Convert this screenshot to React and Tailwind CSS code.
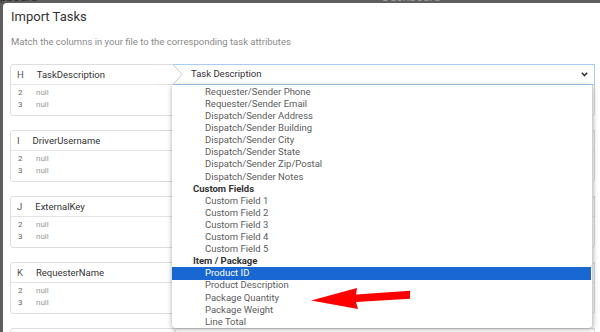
import React from 'react';

const options = [
  { t: 'opt', label: 'Requester/Sender Phone' },
  { t: 'opt', label: 'Requester/Sender Email' },
  { t: 'opt', label: 'Dispatch/Sender Address' },
  { t: 'opt', label: 'Dispatch/Sender Building' },
  { t: 'opt', label: 'Dispatch/Sender City' },
  { t: 'opt', label: 'Dispatch/Sender State' },
  { t: 'opt', label: 'Dispatch/Sender Zip/Postal' },
  { t: 'opt', label: 'Dispatch/Sender Notes' },
  { t: 'group', label: 'Custom Fields' },
  { t: 'opt', label: 'Custom Field 1' },
  { t: 'opt', label: 'Custom Field 2' },
  { t: 'opt', label: 'Custom Field 3' },
  { t: 'opt', label: 'Custom Field 4' },
  { t: 'opt', label: 'Custom Field 5' },
  { t: 'group', label: 'Item / Package' },
  { t: 'sel', label: 'Product ID' },
  { t: 'opt', label: 'Product Description' },
  { t: 'opt', label: 'Package Quantity' },
  { t: 'opt', label: 'Package Weight' },
  { t: 'opt', label: 'Line Total' },
];

const columns = [
  { col: 'H', name: 'TaskDescription', open: true },
  { col: 'I', name: 'DriverUsername' },
  { col: 'J', name: 'ExternalKey' },
  { col: 'K', name: 'RequesterName' },
  { col: 'L', name: 'RequesterPhone' },
];

const Dropdown = () => (
  <div className="absolute left-[-1px] top-full z-10 mt-px h-[243px] w-[421px] overflow-hidden rounded-[4px] rounded-t-none border-r border-[#cfcfcf] bg-white pt-px shadow-[0_1px_5px_rgba(0,0,0,0.35)]">
    {options.map((o, i) => (
      <div
        key={i}
        className={`mr-px flex h-[12.1px] items-center whitespace-nowrap text-[9.5px] ${
          o.t === 'group'
            ? 'pl-[21px] font-bold text-[#333]'
            : o.t === 'sel'
            ? 'bg-[#1967d2] pl-[33px] text-white'
            : 'pl-[33px] text-[#5c5c5c]'
        }`}
      >
        {o.label}
      </div>
    ))}
  </div>
);

const Card = ({ col, name, open }) => (
  <div className="mb-[14px] rounded-[3px] border border-[#dedede] bg-white">
    <div className="flex h-[20px] items-center border-b border-[#e3e3e3]">
      <div className="flex w-[162px] shrink-0 items-center gap-[13px] pl-[6px] text-[9.5px] leading-[12px]">
        <span className="text-[#555]">{col}</span>
        <span className="text-[#333]">{name}</span>
      </div>
      <div
        className={`relative -my-px -mr-px flex flex-1 items-center justify-between self-stretch border border-l-0 pl-[18px] pr-[6px] text-[9.5px] text-[#333] ${
          open ? 'border-[#a8cdf5]' : 'border-[#dedede]'
        }`}
      >
        <svg className="absolute left-0 top-[-1px]" width="10" height="21" viewBox="0 0 10 21">
          <polyline points="0,0.5 9,10.5 0,20.5" fill="white" stroke="#c9c9c9" strokeWidth="1" />
        </svg>
        <span>{open ? 'Task Description' : ''}</span>
        <svg width="7" height="5" viewBox="0 0 7 5">
          <polyline points="0.8,0.8 3.5,3.6 6.2,0.8" fill="none" stroke="#333" strokeWidth="1.5" />
        </svg>
        {open && <Dropdown />}
      </div>
    </div>
    <div className="pb-[4px] pt-[2px] text-[8px] leading-[12px]">
      {['2', '3'].map((n) => (
        <div key={n} className="flex pl-[7px]">
          <span className="w-[18px] text-[#666]">{n}</span>
          <span className="text-[#999]">null</span>
        </div>
      ))}
    </div>
  </div>
);

export default function App() {
  return (
    <div className="relative h-[332px] w-[600px] overflow-hidden bg-[#5e5e5e] font-['Roboto',sans-serif]">
      {/* backdrop behind the modal */}
      <div className="flex h-[3px] overflow-hidden text-[12px] leading-[12px]">
        <span className="ml-[-14px] mt-[-9px] text-[#2e2e2e]">Clipboard</span>
        <span className="ml-[345px] mt-[-9px] text-[#9a9a9a]">Dashboard</span>
      </div>
      <div className="flex">
        <div className="w-[3px] shrink-0" />
        <div className="h-[329px] flex-1 rounded-tl-[4px] bg-white pl-[7px] pr-[5px] pt-[6px]">
          <div className="ml-px text-[13px] leading-[16px] text-[#333]">Import Tasks</div>
          <div className="ml-px mt-[11px] text-[9.5px] leading-[12px] text-[#8a8a8a]">
            Match the columns in your file to the corresponding task attributes
          </div>
          <div className="mt-[16px]">
            {columns.map((c) => (
              <Card key={c.col} {...c} />
            ))}
          </div>
        </div>
      </div>
      {/* annotation arrow */}
      <svg className="absolute left-[300px] top-[280px] z-20" width="120" height="40" viewBox="0 0 120 40">
        <polygon
          points="11,20.5 57,8 56,14.5 110,10.8 110,18.8 56,22 58,29"
          fill="#ff0000"
        />
      </svg>
    </div>
  );
}
